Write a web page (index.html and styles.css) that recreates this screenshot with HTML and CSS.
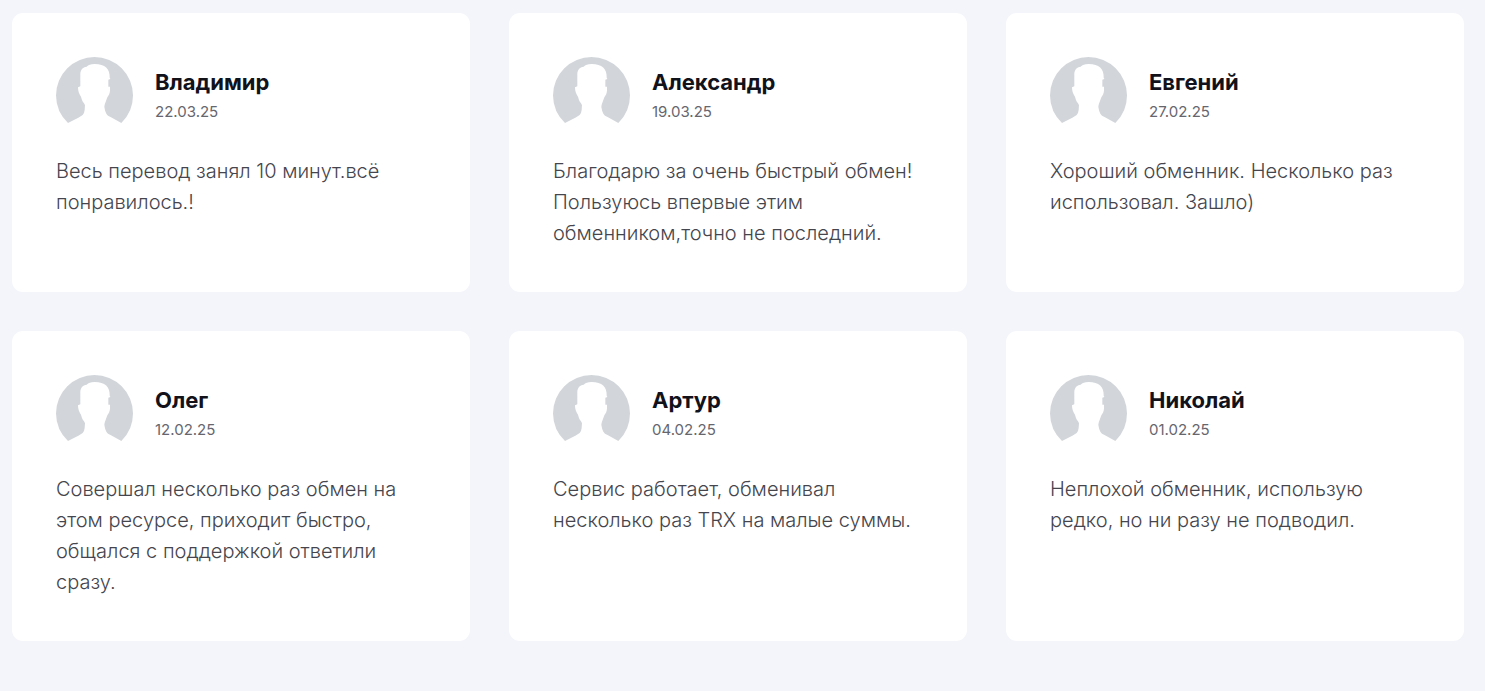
FILE: index.html
```html
<!DOCTYPE html>
<html lang="ru">
<head>
<meta charset="utf-8">
<title>Отзывы</title>
<link rel="stylesheet" href="styles.css">
</head>
<body>
<svg class="sprite" aria-hidden="true">
  <symbol id="avatar" viewBox="18 21 231 231">
    <path d="M54 219A115.500 115.500 0 0 1 18 136.500A115.500 115.500 0 0 1 249 136.500A115.500 115.500 0 0 1 214 219L183 202Q172 197 169 191Q165 184 163 171Q163 165 166 158L172 142C176 137 180 129 180 121L180 110L175 110L175 89L181 87L179 83C180 57 165 42 134 42C122 42 115 45 110 50C98 51 91 60 91 73L91 109L84 112C84 122 87 133 93 140L96 150C98 156 104 160 105 166L104 180Q103 190 98 195Q93 199 85 203Z"/>
  </symbol>
</svg>
<main class="reviews">
  <article class="review">
    <header class="review-head">
      <svg class="avatar" aria-hidden="true"><use href="#avatar"/></svg>
      <div><h2 class="name">Владимир</h2><time class="date" datetime="2025-03-22">22.03.25</time></div>
    </header>
    <p class="text">Весь перевод занял 10 минут.всё понравилось.!</p>
  </article>
  <article class="review">
    <header class="review-head">
      <svg class="avatar" aria-hidden="true"><use href="#avatar"/></svg>
      <div><h2 class="name">Александр</h2><time class="date" datetime="2025-03-19">19.03.25</time></div>
    </header>
    <p class="text">Благодарю за очень быстрый обмен! Пользуюсь впервые этим обменником,точно не последний.</p>
  </article>
  <article class="review">
    <header class="review-head">
      <svg class="avatar" aria-hidden="true"><use href="#avatar"/></svg>
      <div><h2 class="name">Евгений</h2><time class="date" datetime="2025-02-27">27.02.25</time></div>
    </header>
    <p class="text">Хороший обменник. Несколько раз использовал. Зашло)</p>
  </article>
  <article class="review">
    <header class="review-head">
      <svg class="avatar" aria-hidden="true"><use href="#avatar"/></svg>
      <div><h2 class="name">Олег</h2><time class="date" datetime="2025-02-12">12.02.25</time></div>
    </header>
    <p class="text">Совершал несколько раз обмен на этом ресурсе, приходит быстро, общался с поддержкой ответили сразу.</p>
  </article>
  <article class="review">
    <header class="review-head">
      <svg class="avatar" aria-hidden="true"><use href="#avatar"/></svg>
      <div><h2 class="name">Артур</h2><time class="date" datetime="2025-02-04">04.02.25</time></div>
    </header>
    <p class="text">Сервис работает, обменивал несколько раз TRX на малые суммы.</p>
  </article>
  <article class="review">
    <header class="review-head">
      <svg class="avatar" aria-hidden="true"><use href="#avatar"/></svg>
      <div><h2 class="name">Николай</h2><time class="date" datetime="2025-02-01">01.02.25</time></div>
    </header>
    <p class="text">Неплохой обменник, использую редко, но ни разу не подводил.</p>
  </article>
</main>
</body>
</html>
```
FILE: styles.css
```css
* { box-sizing: border-box; }
body {
  margin: 0;
  background: #f4f5fb;
  color: #45454d;
  font-family: Inter, "Liberation Sans", sans-serif;
  font-weight: 300;
}
.sprite { display: none; }
.reviews {
  display: grid;
  grid-template-columns: repeat(3, minmax(0, 1fr));
  gap: 39px;
  padding: 13px 21px 50px 12px;
}
.review {
  padding: 44px 44px 43px;
  border-radius: 11px;
  background: #fff;
}
.review-head {
  display: flex;
  align-items: center;
  gap: 22px;
  margin-bottom: 22px;
}
.avatar {
  flex: none;
  width: 77px;
  height: 77px;
  fill: #d2d6db;
}
.name {
  margin: 0 0 4px;
  color: #11121a;
  font-size: 22px;
  line-height: 28px;
  font-weight: 700;
}
.date {
  display: block;
  color: #66666e;
  font-size: 15px;
  line-height: 23px;
  font-weight: 400;
}
.text {
  margin: 0;
  font-size: 20px;
  line-height: 31px;
}
```
